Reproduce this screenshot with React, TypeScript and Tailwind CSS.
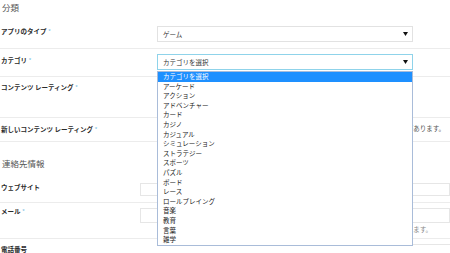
import React from "react";

const items = [
  "カテゴリを選択",
  "アーケード",
  "アクション",
  "アドベンチャー",
  "カード",
  "カジノ",
  "カジュアル",
  "シミュレーション",
  "ストラテジー",
  "スポーツ",
  "パズル",
  "ボード",
  "レース",
  "ロールプレイング",
  "音楽",
  "教育",
  "言葉",
  "雑学",
];

function Arrow() {
  return (
    <svg width="5" height="4" viewBox="0 0 5 4" className="block">
      <path d="M0 0 H5 L2.5 4 Z" fill="#111" />
    </svg>
  );
}

function Label({ text, req }: { text: string; req?: boolean }) {
  return (
    <div className="text-[6.5px] leading-[10px] font-bold text-[#2b2b2b] whitespace-nowrap">
      {text}
      {req && <span className="font-normal text-[#7ec3e3]"> *</span>}
    </div>
  );
}

export default function App() {
  return (
    <div className="relative w-[450px] h-[253px] overflow-hidden bg-white font-['Noto_Sans_CJK_JP',sans-serif] text-[6.5px] leading-[10px]">
      <div className="h-[19px] pl-[2px] pt-[1px] text-[8.5px] leading-[12px] text-[#555]">分類</div>

      {/* Row 1 */}
      <div className="flex h-[30px] border-b border-[#ececec]">
        <div className="w-[157px] pl-[1px] pt-[7px]">
          <Label text="アプリのタイプ" req />
        </div>
        <div className="pt-[7px]">
          <div className="flex items-center justify-between w-[256px] h-[16px] border border-[#e2e2e2] pl-[5px] pr-[4px]">
            <span className="text-[6.5px] leading-[10px] text-[#333]">ゲーム</span>
            <Arrow />
          </div>
        </div>
      </div>

      {/* Row 2 */}
      <div className="flex h-[28px] border-b border-[#ececec]">
        <div className="w-[157px] pl-[1px] pt-[6px]">
          <Label text="カテゴリ" req />
        </div>
        <div className="pt-[5px]">
          <div className="flex items-center justify-between w-[256px] h-[16px] border border-[#8fd3ea] pl-[5px] pr-[4px]">
            <span className="text-[6.5px] leading-[10px] text-[#333]">カテゴリを選択</span>
            <Arrow />
          </div>
        </div>
      </div>

      {/* Row 3 */}
      <div className="flex h-[41px] border-b border-[#ececec]">
        <div className="w-[157px] pl-[1px] pt-[5px]">
          <Label text="コンテンツ レーティング" req />
        </div>
      </div>

      {/* Row 4 */}
      <div className="flex h-[24px] border-b border-[#ececec]">
        <div className="w-[157px] pl-[1px] pt-[6px]">
          <Label text="新しいコンテンツ レーティング" req />
        </div>
        <div className="flex-1 flex justify-end pr-[5px] pt-[5px]">
          <span className="text-[6.5px] leading-[10px] text-[#555] whitespace-nowrap">
            新しい質問票に回答する必要があります。
          </span>
        </div>
      </div>

      <div className="h-[34px] pl-[2px] pt-[16px] text-[8.5px] leading-[10px] text-[#555]">連絡先情報</div>

      {/* Website */}
      <div className="flex h-[27px] border-b border-[#ececec]">
        <div className="w-[157px] pl-[1px] pt-[6px]">
          <Label text="ウェブサイト" />
        </div>
        <div className="pt-[7px] pl-[6px]">
          <div className="w-[310px] h-[13px] border border-[#e6e6e6]" />
        </div>
      </div>

      {/* Email */}
      <div className="flex h-[36px] border-b border-[#ececec]">
        <div className="w-[157px] pl-[1px] pt-[3px]">
          <Label text="メール" req />
        </div>
        <div className="flex-1 flex flex-col pt-[5px] pl-[6px]">
          <div className="w-[310px] h-[15px] border border-[#e6e6e6]" />
          <div className="flex justify-end pr-[18px] pt-[1px]">
            <span className="text-[6.5px] leading-[10px] text-[#888] whitespace-nowrap">
              このアドレスはユーザーに公開されます。
            </span>
          </div>
        </div>
      </div>

      {/* Phone */}
      <div className="flex h-[30px]">
        <div className="w-[157px] pl-[1px] pt-[5px]">
          <Label text="電話番号" />
        </div>
        <div className="flex-1 pt-[5px] pl-[200px]">
          <div className="h-[15px] border-t border-[#e6e6e6]" />
        </div>
      </div>

      {/* Dropdown list overlay */}
      <div className="absolute left-[157px] top-[71px] w-[256px] border border-[#a9bcd9] bg-white">
        {items.map((it, i) => (
          <div
            key={it}
            className={
              i === 0
                ? "h-[9.6px] pl-[5px] text-[6.5px] leading-[9.6px] bg-[#1e90ff] text-white whitespace-nowrap"
                : "h-[9.6px] pl-[5px] text-[6.5px] leading-[9.6px] text-[#222] whitespace-nowrap"
            }
          >
            {it}
          </div>
        ))}
      </div>
    </div>
  );
}
